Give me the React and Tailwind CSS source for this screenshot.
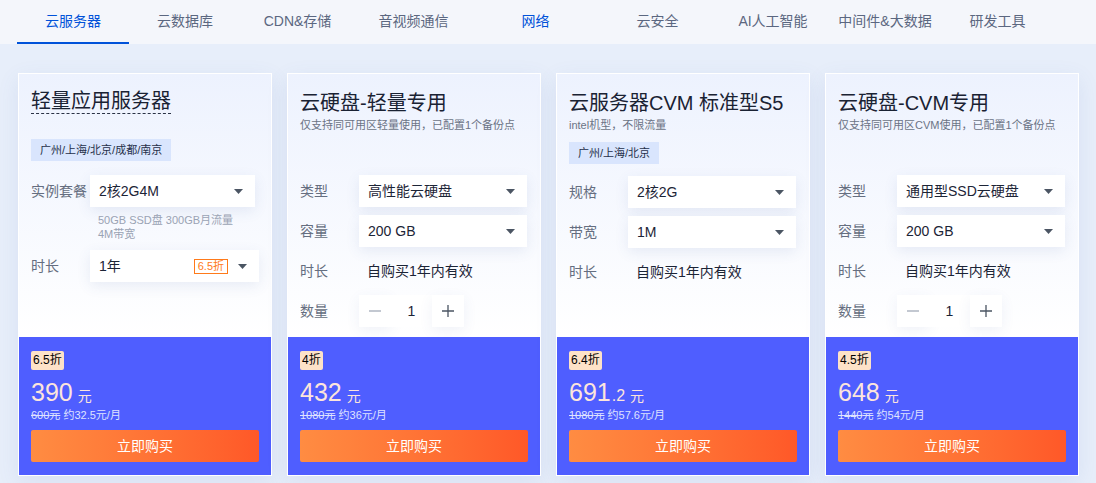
import React from "react";

const TABS = [
  { name: "云服务器", w: "w-[112px]", active: true },
  { name: "云数据库", w: "w-[112px]" },
  { name: "CDN&存储", w: "w-[113px]" },
  { name: "音视频通信", w: "w-[119px]" },
  { name: "网络", w: "w-[125px]", blue: true },
  { name: "云安全", w: "w-[119px]" },
  { name: "AI人工智能", w: "w-[112px]" },
  { name: "中间件&大数据", w: "w-[112px]" },
  { name: "研发工具", w: "w-[113px]" },
];

const Caret = () => (
  <svg width="9" height="5" viewBox="0 0 9 5" className="shrink-0">
    <path d="M0 0h9L4.5 5z" fill="#4b5563" />
  </svg>
);

const Row = ({ label, children }) => (
  <div className="flex items-center h-[32px]">
    <span className="w-[59px] shrink-0 text-[14px] leading-[20px] text-[#656e80]">{label}</span>
    {children}
  </div>
);

const Select = ({ value, w = "w-[168px]", badge }) => (
  <div className={`${w} h-[32px] bg-white flex items-center pl-[9px] pr-[12px] shadow-[0_4px_14px_rgba(60,90,160,0.10)]`}>
    <span className="flex-1 text-[14px] leading-[20px] text-[#1c2436]">{value}</span>
    {badge && (
      <span className="mr-[10px] h-[15px] px-[3px] border border-[#ff7a1a] text-[#ff7a1a] text-[11px] leading-[13px] flex items-center">
        {badge}
      </span>
    )}
    <Caret />
  </div>
);

const Stepper = () => (
  <div className="flex h-[32px]">
    <div className="w-[32px] h-[32px] bg-white flex items-center justify-center shadow-[0_4px_14px_rgba(60,90,160,0.08)]">
      <svg width="12" height="12" viewBox="0 0 12 12"><path d="M0 6h12" stroke="#a3abb8" strokeWidth="1.3" /></svg>
    </div>
    <div className="w-[41px] h-[32px] bg-white flex items-center justify-center text-[14px] text-[#1c2436]">1</div>
    <div className="w-[32px] h-[32px] bg-white flex items-center justify-center shadow-[0_4px_14px_rgba(60,90,160,0.08)]">
      <svg width="12" height="12" viewBox="0 0 12 12"><path d="M0 6h12M6 0v12" stroke="#4b5563" strokeWidth="1.3" /></svg>
    </div>
  </div>
);

const Tag = ({ children }) => (
  <div className="inline-flex items-center h-[22px] px-[9px] bg-[#d9e5fd] text-[11px] text-[#26304a]">{children}</div>
);

const Title = ({ children }) => (
  <div className="text-[20px] leading-[28px] text-[#1a2233]">{children}</div>
);

const Sub = ({ children }) => (
  <div className="text-[11px] leading-[16px] text-[#6b7385]">{children}</div>
);

const Price = ({ off, big, dec, was, month }) => (
  <div className="h-[138px] bg-[#4f5eff] px-[12px] pt-[10px]">
    <div className="inline-flex items-center h-[19px] px-[2px] bg-[#fde2c8] rounded-[2px] text-[12px] text-black">{off}</div>
    <div className="mt-[6px] h-[30px] flex items-baseline text-[#fde5dc] leading-[30px]">
      <span className="text-[25px]">{big}</span>
      {dec && <span className="text-[16px] ml-[1px]">{dec}</span>}
      <span className="text-[14px] ml-[5px]">元</span>
    </div>
    <div className="text-[11px] leading-[16px] text-[#dfe3ff]">
      <span className="line-through">{was}元</span> 约{month}元/月
    </div>
    <button className="mt-[7px] w-full h-[32px] rounded-[2px] bg-gradient-to-r from-[#ff8c42] to-[#ff5828] text-white text-[14px]">
      立即购买
    </button>
  </div>
);

const Card = ({ children, price }) => (
  <div className="w-[254px] h-[403px] shrink-0 border border-white flex flex-col shadow-[0_6px_20px_rgba(80,110,180,0.10)]">
    <div className="flex-1 px-[12px] bg-gradient-to-b from-[#edf2fe] to-white">{children}</div>
    <Price {...price} />
  </div>
);

export default function App() {
  return (
    <div
      className="w-[1096px] h-[483px] overflow-hidden bg-[#e7eefa]"
      style={{ fontFamily: '"Liberation Sans", "Noto Sans CJK SC", sans-serif' }}
    >
      <nav className="h-[44px] bg-[#f4f6fb] flex pl-[17px]">
        {TABS.map((t) => (
          <div
            key={t.name}
            className={`${t.w} h-[44px] flex items-center justify-center text-[14px] border-b-2 ${
              t.active ? "border-[#0052d9] text-[#0052d9]" : "border-transparent"
            } ${t.blue ? "text-[#0052d9]" : t.active ? "" : "text-[#5b6780]"}`}
          >
            {t.name}
          </div>
        ))}
      </nav>

      <div className="flex gap-[15px] pl-[18px] pt-[29px]">
        <Card price={{ off: "6.5折", big: "390", was: "600", month: "32.5" }}>
          <div className="pt-[15px]">
            <div className="inline-block text-[20px] leading-[24px] text-[#1a2233] border-b border-dashed border-[#2a3245]">
              轻量应用服务器
            </div>
          </div>
          <div className="mt-[22px]"><Tag>广州/上海/北京/成都/南京</Tag></div>
          <div className="mt-[14px]">
            <Row label="实例套餐"><Select value="2核2G4M" w="w-[165px]" /></Row>
          </div>
          <div className="mt-[6px] pl-[67px] text-[11px] leading-[14px] text-[#9aa3b4]">
            50GB SSD盘 300GB月流量<br />4M带宽
          </div>
          <div className="mt-[9px]">
            <Row label="时长"><Select value="1年" w="w-[169px]" badge="6.5折" /></Row>
          </div>
        </Card>

        <Card price={{ off: "4折", big: "432", was: "1080", month: "36" }}>
          <div className="pt-[15px]"><Title>云硬盘-轻量专用</Title><Sub>仅支持同可用区轻量使用，已配置1个备份点</Sub></div>
          <div className="mt-[42px] flex flex-col gap-[8px]">
            <Row label="类型"><Select value="高性能云硬盘" /></Row>
            <Row label="容量"><Select value="200 GB" /></Row>
            <Row label="时长"><span className="pl-[8px] text-[14px] text-[#1c2436]">自购买1年内有效</span></Row>
            <Row label="数量"><Stepper /></Row>
          </div>
        </Card>

        <Card price={{ off: "6.4折", big: "691", dec: ".2", was: "1080", month: "57.6" }}>
          <div className="pt-[15px]"><Title>云服务器CVM 标准型S5</Title><Sub>intel机型，不限流量</Sub></div>
          <div className="mt-[7px]"><Tag>广州/上海/北京</Tag></div>
          <div className="mt-[12px] flex flex-col gap-[8px]">
            <Row label="规格"><Select value="2核2G" /></Row>
            <Row label="带宽"><Select value="1M" /></Row>
            <Row label="时长"><span className="pl-[8px] text-[14px] text-[#1c2436]">自购买1年内有效</span></Row>
          </div>
        </Card>

        <Card price={{ off: "4.5折", big: "648", was: "1440", month: "54" }}>
          <div className="pt-[15px]"><Title>云硬盘-CVM专用</Title><Sub>仅支持同可用区CVM使用，已配置1个备份点</Sub></div>
          <div className="mt-[42px] flex flex-col gap-[8px]">
            <Row label="类型"><Select value="通用型SSD云硬盘" /></Row>
            <Row label="容量"><Select value="200 GB" /></Row>
            <Row label="时长"><span className="pl-[8px] text-[14px] text-[#1c2436]">自购买1年内有效</span></Row>
            <Row label="数量"><Stepper /></Row>
          </div>
        </Card>
      </div>
    </div>
  );
}
